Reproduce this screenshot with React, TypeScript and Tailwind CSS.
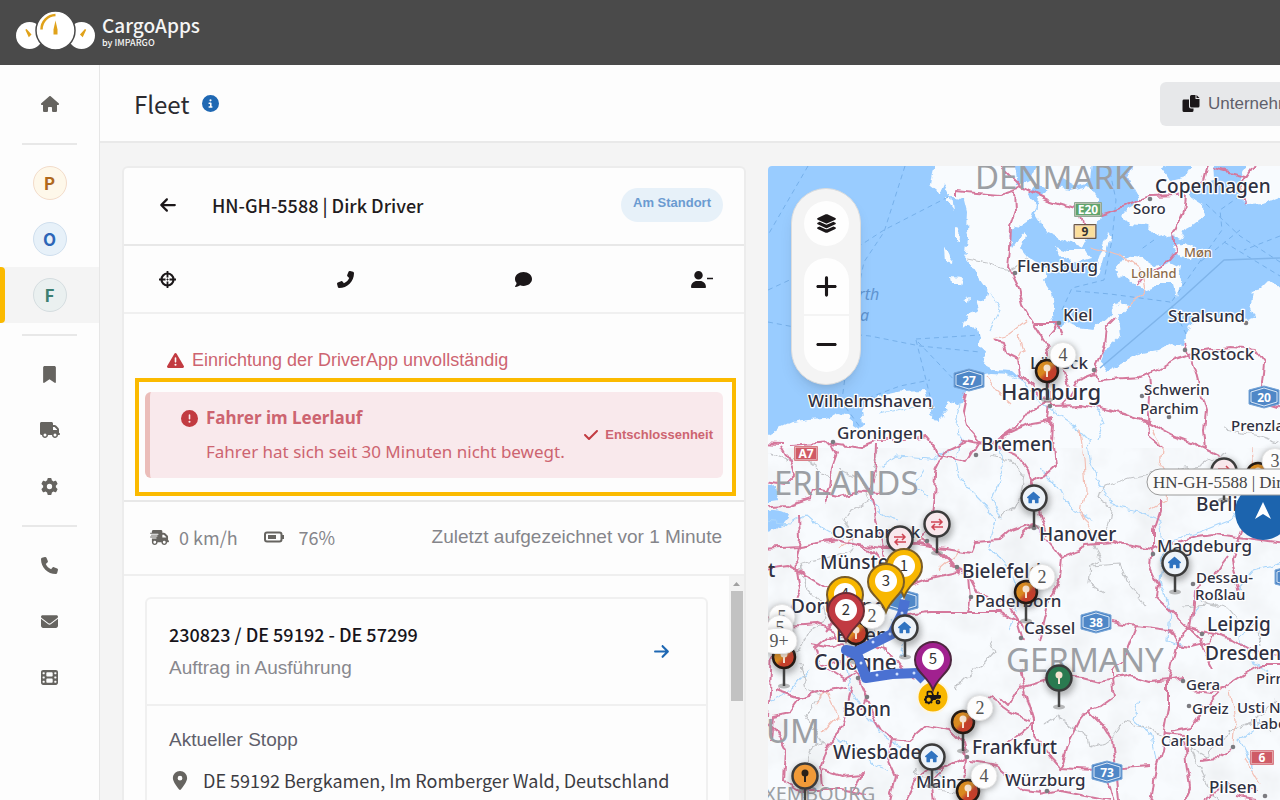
import type { ReactNode } from 'react';
import {
  FaArrowLeft,
  FaArrowRight,
  FaBookmark,
  FaCheck,
  FaCircleExclamation,
  FaCircleInfo,
  FaComment,
  FaEnvelope,
  FaFilm,
  FaGear,
  FaHouse,
  FaLayerGroup,
  FaLocationDot,
  FaMinus,
  FaPhone,
  FaPlus,
  FaTractor,
  FaTriangleExclamation,
  FaTruck,
  FaTruckFast,
  FaUser,
} from 'react-icons/fa6';

const sans = "font-['Noto_Sans_CJK_SC',sans-serif]";
const arial = "font-['Liberation_Sans',Arial,sans-serif]";

/* ---------- Header ---------- */

function Logo() {
  return (
    <svg viewBox="0 0 80 40" className="h-10 w-20 shrink-0" aria-hidden="true">
      <circle cx="13.5" cy="24.5" r="13.5" fill="#fff" />
      <circle cx="65.5" cy="24.5" r="13.5" fill="#fff" />
      <circle cx="39.5" cy="19.5" r="19.5" fill="#fff" stroke="#4a4a4a" strokeWidth="1.5" />
      <path d="M25.500 18.500a14.500 14.500 0 0 1 14-14.500" fill="none" stroke="#e0a21a" strokeWidth="2.500" />
      <path d="M39.500 9.500l2 9v5h-4v-5z" fill="#e0a21a" />
      <path d="M10 18.500l4.500 5-1.500 1.500z" fill="#e0a21a" stroke="#e0a21a" strokeWidth="1.500" />
      <path d="M69.500 18.500l-4.500 5 1.500 1.500z" fill="#e0a21a" stroke="#e0a21a" strokeWidth="1.500" />
    </svg>
  );
}

function TopBar() {
  return (
    <header className="flex h-[65px] shrink-0 items-center gap-1.5 bg-[#4a4a4a] px-4 pb-1 text-[#f5f5f5]">
      <Logo />
      <div className={sans}>
        <div className="text-[19px] leading-6 font-medium">CargoApps</div>
        <div className="text-[9px] leading-3 font-medium">by IMPARGO</div>
      </div>
    </header>
  );
}

/* ---------- Sidebar ---------- */

function NavItem({ label, active = false, children }: { label: string; active?: boolean; children: ReactNode }) {
  return (
    <a
      href="#"
      aria-label={label}
      className={
        active
          ? 'relative flex h-14 items-center justify-center bg-[#f4f4f4] text-[#666460]'
          : 'relative flex h-14 items-center justify-center text-[#666460]'
      }
    >
      {active && <span className="absolute inset-y-0 left-0 w-[5px] rounded-r bg-[#fbba00]" />}
      {children}
    </a>
  );
}

function NavDivider() {
  return (
    <div className="flex h-[23px] items-center px-[22px]">
      <hr className="w-full border-t-2 border-[#e8e8e8]" />
    </div>
  );
}

function Sidebar() {
  const badge = `flex size-[34px] items-center justify-center rounded-full border text-[17px] leading-5 font-bold ${sans}`;
  return (
    <nav className="w-[100px] shrink-0 border-r border-[#e6e6e6] bg-[#fdfdfd] pt-[11px]">
      <NavItem label="Start"><FaHouse size={18} /></NavItem>
      <NavDivider />
      <NavItem label="Planung"><span className={`${badge} border-[#f3dcca] bg-[#fef8ea] text-[#b0691c]`}>P</span></NavItem>
      <NavItem label="Aufträge"><span className={`${badge} border-[#cfdfee] bg-[#e7f1f9] text-[#2c66b8]`}>O</span></NavItem>
      <NavItem label="Fleet" active><span className={`${badge} border-[#d5dde0] bg-[#eaf0f0] text-[#3c7f72]`}>F</span></NavItem>
      <NavDivider />
      <NavItem label="Lesezeichen"><FaBookmark size={17} /></NavItem>
      <NavItem label="Fahrzeuge"><FaTruck size={20} /></NavItem>
      <NavItem label="Einstellungen"><FaGear size={17} /></NavItem>
      <NavDivider />
      <NavItem label="Telefon"><FaPhone size={17} /></NavItem>
      <NavItem label="Nachrichten"><FaEnvelope size={17} /></NavItem>
      <NavItem label="Videos"><FaFilm size={17} /></NavItem>
    </nav>
  );
}

/* ---------- Title bar ---------- */

function CopyIcon() {
  return (
    <svg viewBox="0 0 18 18" className="size-[18px] shrink-0" fill="#1b1719" aria-hidden="true">
      <path d="M1.500 4.500H7V11.500Q7 13.500 9 13.500H11.500V15.500Q11.500 17 10 17H2Q.500 17 .500 15.500V6Q.500 4.500 1.500 4.500Z" />
      <path d="M9.500 0H13.500V4H17.500V11Q17.500 12.500 16 12.500H9.500Q8 12.500 8 11V1.500Q8 0 9.500 0Z" />
      <path d="M14.500 0L17.500 3H14.500Z" />
    </svg>
  );
}

function TitleBar() {
  return (
    <div className="flex h-[78px] shrink-0 items-center overflow-hidden border-b-2 border-[#e9e9e9] bg-[#fdfdfd] pt-px pl-[34px]">
      <h1 className={`text-[24px] leading-8 text-[#2b2b30] ${sans}`}>Fleet</h1>
      <FaCircleInfo size={17} className="ml-[13px] text-[#1f68b3]" />
      <div className="ml-auto w-[120px]">
        <button type="button" className={`flex h-11 items-center gap-2 rounded-md bg-[#e7e8ea] px-[22px] text-[17px] whitespace-nowrap text-[#5f5f6b] ${arial}`}>
          <CopyIcon />
          Unternehmen
        </button>
      </div>
    </div>
  );
}

/* ---------- Driver panel ---------- */

function CrosshairIcon() {
  return (
    <svg viewBox="0 0 17 17" className="size-[17px]" fill="none" stroke="#1b1719" aria-hidden="true">
      <circle cx="8.500" cy="8.500" r="6" strokeWidth="2.200" />
      <path d="M8.500 0V6.500M8.500 10.500V17M0 8.500H6.500M10.500 8.500H17" strokeWidth="1.800" />
      <path d="M8.500 7.500v2M7.500 8.500h2" strokeWidth="1" />
    </svg>
  );
}

function BatteryIcon() {
  return (
    <svg viewBox="0 0 20 12" className="h-3 w-5" fill="none" aria-hidden="true">
      <rect x="1" y="1.500" width="16.500" height="9" rx="2" stroke="#666460" strokeWidth="2" />
      <rect x="4" y="4" width="8" height="4" fill="#666460" />
      <path d="M18 4h2v4h-2z" fill="#666460" />
    </svg>
  );
}

function DriverPanel() {
  const action = 'flex w-[22px] items-center justify-center';
  return (
    <section className="flex min-h-0 flex-col rounded-t-md border-2 border-b-0 border-[#ececec] bg-[#fdfdfd]">
      <div className="flex h-[78px] shrink-0 items-center border-b-2 border-[#e8e8e8] pr-[21px] pb-0.5 pl-[35px]">
        <button type="button" aria-label="Zurück" className="text-[#1b1719]"><FaArrowLeft size={18} /></button>
        <h2 className={`ml-[35px] text-[18px] leading-7 font-medium text-[#1f1b20] ${sans}`}>HN-GH-5588 | Dirk Driver</h2>
        <span className={`ml-auto flex h-[34px] items-center rounded-full bg-[#e7f1f9] px-3 pb-1 text-[13px] font-bold text-[#6b9bd1] ${arial}`}>Am Standort</span>
      </div>
      <div className="flex h-[68px] shrink-0 items-center justify-between border-b-2 border-[#f0f0f0] px-8 text-[#1b1719]">
        <button type="button" aria-label="Orten" className={action}><CrosshairIcon /></button>
        <button type="button" aria-label="Anrufen" className={action}><FaPhone size={17} className="-scale-x-100" /></button>
        <button type="button" aria-label="Nachricht" className={action}><FaComment size={17} /></button>
        <button type="button" aria-label="Fahrer entfernen" className={action}>
          <FaUser size={17} className="shrink-0" />
          <svg viewBox="0 0 6 17" className="h-[17px] w-1.5 shrink-0" aria-hidden="true"><path d="M0 7.500H6" stroke="#1b1719" strokeWidth="1.500" /></svg>
        </button>
      </div>
      <div className="flex h-[188px] shrink-0 flex-col border-b-2 border-[#e8e8e8] px-[11px] pt-8 pr-2">
        <p className={`flex h-7 items-center gap-2 pl-8 text-[18px] text-[#cd6470] ${arial}`}>
          <FaTriangleExclamation size={17} className="text-[#c23b41]" />
          Einrichtung der DriverApp unvollständig
        </p>
        <div className="mt-1 h-[118px] border-4 border-[#fbba00] py-2.5 pr-[9px] pl-1.5">
          <div className="flex h-[86px] items-center rounded-md border-l-[5px] border-[#ebbdb9] bg-[#f9e9ec] pr-2.5 pl-[31px]">
            <div className="grid grid-cols-[auto_1fr] gap-x-2 gap-y-2.5 font-['Noto_Sans',sans-serif] text-[#cd6470]">
              <FaCircleExclamation size={17} className="self-center text-[#c23b41]" />
              <h3 className="text-[17px] leading-6 font-bold">Fahrer im Leerlauf</h3>
              <p className="col-start-2 text-[17px] leading-6 whitespace-nowrap">Fahrer hat sich seit 30 Minuten nicht bewegt.</p>
            </div>
            <button type="button" className={`ml-auto flex items-center gap-1.5 pl-2 text-[13px] font-bold text-[#cd6470] ${arial}`}>
              <FaCheck size={16} className="text-[#c23b41]" />
              Entschlossenheit
            </button>
          </div>
        </div>
      </div>
      <div className={`flex h-[74px] shrink-0 items-center border-b-2 border-[#efefef] pr-[22px] pb-0.5 pl-[26px] text-[18px] leading-7 text-[#85858a] ${sans}`}>
        <FaTruckFast size={19} className="text-[#666460]" />
        <span className="ml-2.5">0 km/h</span>
        <span className="ml-[26px]"><BatteryIcon /></span>
        <span className="ml-[15px]">76%</span>
        <span className={`ml-auto text-[19px] ${arial}`}>Zuletzt aufgezeichnet vor 1 Minute</span>
      </div>
      <div className="flex min-h-0 flex-1">
        <div className="min-w-0 flex-1 overflow-hidden px-[21px] pt-[21px]">
          <article className="rounded-t-md border-2 border-[#f0f0f0]">
            <div className="flex h-[107px] items-center border-b-2 border-[#f0f0f0] pr-9 pl-[22px]">
              <div>
                <h3 className={`text-[18px] leading-8 font-medium text-[#17141a] ${sans}`}>230823 / DE 59192 - DE 57299</h3>
                <p className={`text-[19px] leading-9 text-[#88888e] ${arial}`}>Auftrag in Ausführung</p>
              </div>
              <button type="button" aria-label="Auftrag öffnen" className="ml-auto text-[#1f68b3]"><FaArrowRight size={17} /></button>
            </div>
            <div className="pt-4 pb-5 pl-[22px]">
              <h4 className={`text-[19px] leading-9 text-[#5f5f6b] ${arial}`}>Aktueller Stopp</h4>
              <p className={`mt-0.5 flex items-center gap-3.5 pl-0.5 text-[18px] leading-10 whitespace-nowrap text-[#3c3c42] ${sans}`}>
                <FaLocationDot size={19} className="w-[18px] text-[#666460]" />
                DE 59192 Bergkamen, Im Romberger Wald, Deutschland
              </p>
            </div>
          </article>
        </div>
        <div className="flex w-[15px] shrink-0 flex-col items-center bg-[#f3f3f3]">
          <svg viewBox="0 0 15 15" className="size-[15px]" aria-hidden="true"><path d="M4 10L7.500 6L11 10Z" fill="#a0a0a0" /></svg>
          <div className="h-[110px] w-3 bg-[#c2c2c2]" />
        </div>
      </div>
    </section>
  );
}

/* ---------- Map ---------- */

const SEA = [
  'M740 140H934V166L931 186L940 193L944 184L950 195L955 198L964 200L967 212L966 230L968 240L965 258L973 268L980 280L988 292L986 302L976 300L979 311L968 315L964 325L978 328L980 338L978 346L986 352L983 364L994 370L1012 371L1020 378L1010 375L992 374L976 376L972 388L966 391L963 404L956 405L948 400L944 405L945 416L936 421L930 414L934 407L928 403L925 390L903 391L880 396L868 400L862 410L864 424L858 430L852 426L850 416L838 413L826 418L808 419L793 422L780 428L768 435L740 445Z',
  'M1094 140H1133V166L1129 178L1134 190L1140 201L1128 208L1121 215L1130 224L1148 226L1158 238L1172 234L1180 238L1184 230L1195 224L1205 216L1204 205L1190 196L1190 186L1206 182L1214 180L1212 140H1247V166L1241 178L1236 192L1248 205L1264 204L1300 190V286H1280L1268 282L1260 290L1252 292L1250 304L1255 316L1244 320L1226 316L1210 318L1200 314L1192 324L1184 338L1183 346L1170 344L1160 350L1138 354L1122 364L1108 370L1101 360L1106 348L1120 336L1118 318L1130 305L1120 301L1115 308L1106 318L1094 328L1078 326L1066 322L1056 330L1052 316L1054 306L1052 292L1044 280L1050 270L1038 264L1026 256L1020 248L1026 236L1020 226L1032 218L1036 206L1028 194L1036 184L1050 190L1062 178L1076 186L1090 182Z',
  'M1164 170L1176 140H1192V166L1186 176L1170 180Z',
  'M1010 140H1036V166L1030 178L1018 184Z',
  'M1016 226L1030 228L1020 236L1012 248L1008 236Z',
  'M740 490L776 486L778 500L740 506ZM740 512Q784 506 789 516Q784 532 740 536Z',
];

const ISLANDS = [
  'M1038 196L1052 186L1070 190L1088 186L1098 200L1100 216L1094 232L1080 246L1064 240L1046 232L1036 216Z',
  'M1108 232L1111 236L1100 272L1095 279L1098 260Z',
  'M1056 246L1068 250L1084 250L1090 258L1076 262L1060 256Z',
  'M1115 268L1124 256L1142 258L1158 268L1170 262L1182 268L1178 284L1160 284L1144 290L1130 282L1118 274Z',
  'M1174 246L1184 242L1196 250L1192 260L1180 258Z',
  'M1176 270L1182 282L1176 298L1172 284Z',
  'M944 248L952 256L951 264L945 262ZM955 228L960 230L958 241L955 238ZM951 277L962 278L960 284L952 284ZM946 196L952 198L954 210L948 202ZM963 300L969 297L968 302Z',
];

const ROADS = [
  'M956 196L956 190L976 192L1000 194L1020 188M1015 191L1016 210L1011 226L1010 248L1008 268L1018 288L1022 304L1030 318L1044 340L1048 350L1048 400',
  'M990 156L1000 166L1020 186L1048 200L1074 208L1100 215L1120 208L1150 197L1178 196L1194 192M1186 196L1184 212L1174 234L1176 252L1166 264L1148 272L1137 286',
  'M1192 192L1204 180L1210 156M1214 168L1245 176L1240 184L1246 205M1245 178L1260 156M1080 214L1084 226',
  'M1035 324L1058 324L1048 336M1058 324L1062 334M1116 317L1107 326L1105 346L1097 366L1094 374L1098 380L1140 377L1152 373L1174 360L1190 355',
  'M1185 343L1190 356L1196 374L1202 398L1206 412L1204 430L1206 450M1190 354L1210 350L1232 348L1255 350L1264 362L1262 384L1264 402L1290 410',
  'M1151 373L1152 384L1148 396L1147 415L1148 436L1162 448',
  'M1062 350L1064 372L1068 386M1094 374L1078 380L1068 398L1062 404M1050 404L1048 420L1054 424L1053 440L1056 466L1045 476L1030 482L1029 496',
  'M993 339L1003 342L1006 352L1018 358L1020 374L1030 384L1040 396L1052 405L1082 404L1110 410L1148 422L1174 436L1200 446L1220 456',
  'M1048 402L1030 410L1020 424L1000 438L992 446L978 440L966 426L962 412L966 392M1054 420L1030 424L1008 434L990 446L964 440L978 442L1000 448L1018 456L1028 470L1034 492',
  'M758 443L784 444M790 446L832 443L860 447L877 440L904 440L926 436L936 448L940 456L966 462L978 442M966 442L945 452L935 472L934 500L930 526L918 542L900 548L880 548L852 544',
  'M832 443L837 454L832 468L830 488L824 502M877 444L876 466L870 492L876 512L880 538L884 560L880 580L900 600',
  'M782 448L790 462L794 474L784 484L758 480M758 508L786 506L810 498L812 490L840 496L856 492L880 494M799 516L800 540L796 562L800 590L792 610L784 622L758 626',
  'M758 548L800 546L836 540L852 544L870 550L880 562M758 570L788 566L808 576L828 588L846 608',
  'M920 540L936 548L952 564L960 574M880 548L904 542L930 546L972 552L976 542L1000 540L1012 530L1034 522M930 544L952 566L968 574L978 594L1008 604L1018 620L1024 640',
  'M900 616L930 612L960 612L1000 612L1022 622L1026 630M958 572L930 578L908 586L890 598L864 610L840 632M968 576L970 600L968 612',
  'M1034 522L1046 538L1062 558L1078 552L1084 544L1114 542L1120 544L1152 550M1062 558L1060 580L1050 600L1045 620L1040 640M1034 522L1020 536M1040 512L1048 536',
  'M1152 550L1150 566L1158 584L1156 596L1172 612L1188 628L1200 640L1208 660L1212 668M1154 550L1154 530L1160 512L1160 500M1152 550L1170 544L1198 536L1212 534L1232 536L1262 540L1290 544',
  'M1228 556L1216 572L1194 590L1192 616L1190 628L1212 634L1232 640L1252 652L1290 656M1192 646L1208 642L1212 634M1188 626L1176 646L1172 664L1168 682L1168 708L1164 730L1162 750L1156 768L1150 810',
  'M1112 622L1136 626L1170 630L1178 644L1190 646M1136 626L1128 646L1124 660L1112 668L1112 678M1240 600L1232 560L1244 528',
  'M1020 688L1034 684L1060 676L1084 678L1100 682L1130 676L1150 682L1170 680L1186 678M1112 680L1114 696L1100 706L1088 710L1080 720L1070 740L1060 770M1088 710L1102 724L1112 740L1116 768L1120 810',
  'M1290 664L1262 664L1248 672L1226 686L1206 706L1190 728L1170 732M1226 688L1212 692L1190 690M1164 734L1184 736L1186 762L1190 788L1180 810M1200 760L1218 758L1232 748',
  'M1020 670L1026 694L1034 720L1034 734L1050 756L1060 768L1094 770L1150 766M1034 722L1020 734L1004 744M1098 770L1110 786L1116 810M1040 794L1060 790L1110 800',
  'M758 616L788 626L816 624L836 632L846 652L856 672L866 696L862 710M776 690L800 698L822 692L846 688M772 650L770 692L768 716M800 698L790 712L772 716L770 740',
  'M846 634L826 638L814 648L820 664L846 680L856 674M840 640L864 640L886 650L900 668L912 680M826 632L836 620L860 616M810 644L832 648L850 640L866 650M820 666L840 660L852 668L858 676',
  'M852 686L846 710L840 732L826 748L820 766L822 786M866 698L874 716L882 730L892 738L910 740L926 726L950 730L962 742L966 758M892 738L888 758L896 776L888 810',
  'M966 758L946 768L930 768L916 778L900 810M1030 720L1010 712L990 698L976 708M1020 686L1008 706L1000 698M966 758L964 780L976 810M946 766L932 780L936 810M970 762L996 766L1024 790L1042 792',
  'M758 716L776 730L786 750L784 780L800 790L840 790L868 796M822 770L842 776L862 774L852 792M1234 796L1256 800M1204 800L1230 784L1258 790',
];

const MINOR = [
  'M992 338L1010 334L1026 322M1090 246L1120 254L1140 270L1146 292L1126 308M1020 336L1024 350L1018 362M986 376L996 390L1012 404M940 570L956 556L960 546M816 706L826 690L838 716L822 734M1080 430L1084 460L1086 490L1082 512L1094 536M1152 430L1162 448L1160 466L1168 480L1166 500L1150 510M1230 690L1236 720L1234 746M1250 446L1252 470L1248 500M838 550L850 540L860 536M1246 760L1260 784',
];

const RIVERS = [
  'M1000 372L1020 380L1036 398L1052 410L1070 422L1088 440L1090 460L1100 486L1116 508L1140 512L1160 520L1164 550L1160 580L1170 610L1168 640L1184 646',
  'M960 404L956 424L962 440L956 460L960 480L980 500L996 520L990 546L1010 570L1020 600L1010 630',
  'M758 520L790 524L806 514L822 528L844 540M880 466L896 456L930 458L952 452M924 470L914 486L928 496M870 500L884 516L898 520M1000 450L1004 470L992 500L1002 520M1040 470L1060 490L1070 510L1094 520',
  'M846 660L850 690L862 710L880 732L904 750L924 760L946 780M900 656L906 640L890 620M770 700L792 690L810 668M836 736L856 750L872 764L890 770M1140 700L1134 720L1152 736L1156 760M1170 540L1200 532L1230 520L1246 494',
  'M1220 600L1236 590L1254 570L1290 560M1200 606L1190 620M1252 620L1240 640L1254 664L1290 684M1262 720L1240 740L1254 770M990 292L1000 310L990 330M880 414L904 408L924 404M1096 404L1104 422L1098 440',
];

const BORDERS = [
  'M840 470L862 480L870 500L850 510L844 520L856 536L848 552L820 560L800 564L806 586L822 604L826 620L810 630L800 650L780 660M848 606L870 620L884 650M800 664L806 690L820 696L806 716L822 744L810 750L800 790L812 810M768 452L786 460L798 456L830 478M876 448L874 480',
  'M1228 452L1200 466L1160 472L1130 478L1104 486L1100 498L1112 506L1108 528L1094 546L1102 560L1090 566L1088 584L1104 594M1090 566L1120 564L1126 580L1146 606M1184 606L1208 604L1230 610L1246 630L1256 624L1260 646',
  'M1044 724L1056 716L1074 728L1088 736L1090 748L1112 740L1124 722L1150 728L1168 740L1190 746L1206 756L1222 740L1232 730L1254 722L1276 700M1200 600L1218 606M1240 730L1256 720L1270 730M1190 744L1198 764L1212 790L1226 810M966 258L988 262L1000 268L1010 270L1026 258M1224 430L1260 436L1290 446M1240 500L1244 480L1230 460',
  'M954 690L968 676L984 664L994 652L990 640M914 770L940 790L960 794M1000 520L1020 500L1024 476L1010 460L990 456',
];

const FERRIES = [
  'M808 166L768 235M905 166L884 232L864 262L858 290L850 340L842 400M768 290L850 252L884 230L950 196M768 322L810 330L870 336L920 346L960 350L980 352M916 339L980 335M916 340L924 372L930 396M918 342L960 386M840 400L852 416L862 430M868 398L900 386L930 380',
  'M1110 172L1116 200L1112 240L1104 280L1072 288L1062 310M1076 291L1110 294L1170 302L1186 334M1240 196L1220 210L1222 230L1170 304M1206 204L1240 236L1280 262M1240 230L1200 262M1280 236L1244 250M1224 242L1280 276M1154 240L1140 250',
];

type Label = [string, number, number];

const LABELS: { size: string; items: Label[] }[] = [
  { size: 'text-[22px]', items: [['Hamburg', 1001, 400]] },
  {
    size: 'text-[19px]',
    items: [
      ['Copenhagen', 1155, 193],
      ['Bremen', 981, 451],
      ['Hanover', 1039, 541],
      ['Berlin', 1196, 511],
      ['Leipzig', 1207, 631],
      ['Dresden', 1205, 660],
      ['Bielefeld', 962, 578],
      ['Münster', 820, 569],
      ['Dortmund', 791, 613],
      ['Essen', 836, 642],
      ['Bonn', 843, 716],
      ['Frankfurt', 972, 754],
      ['Wiesbaden', 833, 759],
    ],
  },
  { size: 'text-[21px]', items: [['Cologne', 814, 670]] },
  {
    size: 'text-[17px]',
    items: [
      ['Flensburg', 1017, 272],
      ['Kiel', 1063, 321],
      ['Lübeck', 1030, 369],
      ['Stralsund', 1168, 322],
      ['Rostock', 1190, 360],
      ['Wilhelmshaven', 808, 407],
      ['Groningen', 837, 439],
      ['Magdeburg', 1157, 552],
      ['Osnabrück', 832, 538],
      ['Paderborn', 975, 607],
      ['Cassel', 1024, 634],
      ['Mainz', 916, 788],
      ['Würzburg', 1005, 786],
      ['Pilsen', 1209, 793],
    ],
  },
  {
    size: 'text-[15px]',
    items: [
      ['Soro', 1133, 214],
      ['Schwerin', 1144, 395],
      ['Parchim', 1140, 414],
      ['Prenzlau', 1231, 431],
      ['Dessau-', 1196, 583],
      ['Roßlau', 1195, 600],
      ['Gera', 1186, 690],
      ['Greiz', 1192, 714],
      ['Usti Nad', 1237, 713],
      ['Labem', 1252, 729],
      ['Carlsbad', 1161, 746],
      ['Pirna', 1256, 684],
    ],
  },
];

const TOWNS: [number, number][] = [
  [1015, 273], [1059, 323], [1094, 370], [1185, 350], [1150, 199], [1142, 396], [1169, 417], [1246, 323], [931, 407],
  [833, 442], [976, 455], [1050, 406], [1034, 528], [1153, 554], [1193, 584], [1202, 634], [957, 567], [971, 597],
  [867, 697], [1021, 638], [1183, 681], [1189, 706], [1233, 747], [967, 757], [1047, 791], [1265, 796], [927, 541], [858, 678],
];

function Shield({ x, y, text }: { x: number; y: number; text: string }) {
  return (
    <g>
      <path d={`M${x - 15} ${y - 7}L${x} ${y - 11}L${x + 15} ${y - 7}L${x + 15} ${y + 7}L${x} ${y + 11}L${x - 15} ${y + 7}Z`} fill="#4f87c7" stroke="#78a6d8" />
      <path d={`M${x - 13} ${y - 5}L${x} ${y - 9}L${x + 13} ${y - 5}L${x + 13} ${y + 5}L${x} ${y + 9}L${x - 13} ${y + 5}Z`} fill="none" stroke="#dce9f7" />
      <text x={x} y={y + 5} textAnchor="middle" className="fill-white text-[12px] font-bold">{text}</text>
    </g>
  );
}

function Plate({ x, y, w, text, fill, ink, edge }: { x: number; y: number; w: number; text: string; fill: string; ink: string; edge: string }) {
  return (
    <g>
      <rect x={x - w / 2} y={y - 8} width={w} height="15" rx="1" fill={edge} />
      <rect x={x - w / 2 + 1.5} y={y - 6.5} width={w - 3} height="12" fill={fill} stroke="#f2d8d8" strokeWidth="0.500" />
      <text x={x} y={y + 4} textAnchor="middle" fill={ink} className="text-[12px] font-bold">{text}</text>
    </g>
  );
}

function RoundPin({ x, y, kind }: { x: number; y: number; kind: 'home' | 'swap' | 'orange' | 'green' | 'mixed' }) {
  const fills = { home: '#edf3f9', swap: '#f8e8ec', orange: '#f09a38', green: '#2a7a50', mixed: 'url(#mixed)' };
  const radius = kind === 'mixed' ? 11 : 12.5;
  return (
    <g>
      <ellipse cx={x} cy={y + 29} rx="6" ry="2.500" fill="#777" opacity="0.500" />
      <path d={`M${x} ${y + 10}V${y + 29}`} stroke="#444" strokeWidth="2.500" />
      <circle cx={x + 1} cy={y + 3} r={radius + 3} fill="#333" opacity="0.350" filter="url(#soft)" />
      <circle cx={x} cy={y} r={radius} fill={fills[kind]} stroke={kind === 'mixed' ? '#241a14' : '#3b3b3b'} strokeWidth="2.500" />
      {kind === 'home' && <FaHouse x={x - 7} y={y - 7} size={13} color="#2f73c0" />}
      {kind === 'swap' && (
        <path d={`M${x - 6} ${y - 2}H${x + 4}M${x + 2} ${y - 5}L${x + 5} ${y - 2}L${x + 2} ${y + 1}M${x + 6} ${y + 3}H${x - 4}M${x - 2} ${y}L${x - 5} ${y + 3}L${x - 2} ${y + 6}`} stroke="#cf4654" strokeWidth="1.500" fill="none" />
      )}
      {(kind === 'orange' || kind === 'green' || kind === 'mixed') && (
        <g fill={kind === 'orange' ? '#2a2018' : '#f6e3d0'}>
          <circle cx={x} cy={y - 3} r="3.500" />
          <path d={`M${x - 1} ${y}H${x + 1}V${y + 6}H${x - 1}Z`} />
        </g>
      )}
    </g>
  );
}

function Count({ x, y, text, w = 28 }: { x: number; y: number; text: string; w?: number }) {
  return (
    <g>
      <rect x={x - w / 2} y={y - 12} width={w} height="26" rx="13" fill="#555" opacity="0.450" filter="url(#soft)" />
      <rect x={x - w / 2 + 1} y={y - 12.5} width={w - 2} height="25" rx="12.500" fill="#fdfdfd" stroke="#e3e3e3" />
      <text x={x} y={y + 6} textAnchor="middle" className="fill-[#555] font-['Liberation_Serif',serif] text-[18px]">{text}</text>
    </g>
  );
}

function DropPin({ x, y, text, fill, edge }: { x: number; y: number; text: string; fill: string; edge: string }) {
  return (
    <g>
      <path d={`M${x} ${y + 30}C${x - 5} ${y + 16} ${x - 18} ${y + 12} ${x - 18} ${y}A18 18 0 0 1 ${x + 18} ${y}C${x + 18} ${y + 12} ${x + 5} ${y + 16} ${x} ${y + 30}Z`} fill={fill} stroke={edge} strokeWidth="2" />
      <circle cx={x} cy={y - 1} r="11" fill="#fff" />
      <text x={x} y={y + 4} textAnchor="middle" className="fill-[#333] font-['Noto_Sans_CJK_SC',sans-serif] text-[15px]">{text}</text>
    </g>
  );
}

function MapDrawing() {
  return (
    <svg
      viewBox="768 166 512 634"
      preserveAspectRatio="xMinYMin slice"
      className="absolute inset-0 size-full font-['Noto_Sans',sans-serif]"
      role="img"
      aria-label="Karte mit Fahrzeugen"
    >
      <defs>
        <filter id="soft" x="-50%" y="-50%" width="200%" height="200%"><feGaussianBlur stdDeviation="3" /></filter>
        <filter id="relief">
          <feTurbulence type="fractalNoise" baseFrequency="0.030" numOctaves="4" seed="4" />
          <feColorMatrix values="0 0 0 0 0.850  0 0 0 0 0.870  0 0 0 0 0.890  0 0 0 1.600 -0.600" />
        </filter>
        <filter id="coast" filterUnits="userSpaceOnUse" x="740" y="140" width="570" height="690">
          <feTurbulence type="fractalNoise" baseFrequency="0.090" numOctaves="3" seed="8" result="n" />
          <feDisplacementMap in="SourceGraphic" in2="n" scale="9" xChannelSelector="R" yChannelSelector="G" />
        </filter>
        <filter id="bends" filterUnits="userSpaceOnUse" x="740" y="140" width="570" height="690">
          <feTurbulence type="fractalNoise" baseFrequency="0.070" numOctaves="2" seed="3" result="n" />
          <feDisplacementMap in="SourceGraphic" in2="n" scale="9" xChannelSelector="R" yChannelSelector="G" />
        </filter>
        <linearGradient id="mixed" x1="0" y1="0" x2="1" y2="1">
          <stop offset="0.450" stopColor="#d98a20" />
          <stop offset="0.600" stopColor="#c43f2b" />
        </linearGradient>
      </defs>
      <rect x="768" y="166" width="512" height="634" fill="#f8fbfe" />
      <rect x="768" y="480" width="512" height="320" filter="url(#relief)" />
      <g filter="url(#coast)">
        <g fill="#99ccff">{SEA.map((d) => <path key={d} d={d} />)}</g>
        <g fill="#f8fbfe">{ISLANDS.map((d) => <path key={d} d={d} />)}</g>
      </g>
      <g fill="none" strokeLinejoin="round">
        <g stroke="#76b0ea" strokeWidth="1" strokeDasharray="5 4">{FERRIES.map((d) => <path key={d} d={d} />)}</g>
        <path d="M1100 368L1180 300L1224 260L1280 258" stroke="#7fb4ea" strokeWidth="1.500" />
        <g filter="url(#coast)">
          <g stroke="#acd7fb" strokeWidth="1.200">{RIVERS.map((d) => <path key={d} d={d} />)}</g>
          <g stroke="#c3c5c8" strokeWidth="1.200">{BORDERS.map((d) => <path key={d} d={d} />)}</g>
        </g>
        <g filter="url(#bends)">
          <g stroke="#f3bfb4" strokeWidth="1.200">{MINOR.map((d) => <path key={d} d={d} />)}</g>
          <g stroke="#d5789c" strokeWidth="2">{ROADS.map((d) => <path key={d} d={d} />)}</g>
        </g>
      </g>
      <g fill="#7b7b80">{TOWNS.map(([x, y]) => <circle key={`${x}-${y}`} cx={x} cy={y} r="2.300" />)}</g>

      <g className="fill-[#9c9fa4] text-[33px]">
        <text x="975" y="189">DENMARK</text>
        <text x="774" y="495">ERLANDS</text>
        <text x="1006" y="672">GERMANY</text>
        <text x="766" y="743">UM</text>
      </g>
      <text x="764" y="801" className="fill-[#9c9fa4] text-[20px]">XEMBOURG</text>
      <g className="fill-[#5f94cf] text-[16px] italic">
        <text x="838" y="300">North</text>
        <text x="844" y="321">Sea</text>
      </g>
      <g className="fill-[#8a6a4a] text-[13px] font-medium" stroke="#fff" strokeWidth="2" paintOrder="stroke">
        <text x="1184" y="257">Møn</text>
        <text x="1131" y="278">Lolland</text>
      </g>
      {LABELS.map((group) => (
        <g key={group.size} className={`fill-[#2f3142] font-medium ${group.size}`} stroke="#fff" strokeWidth="2.500" strokeLinejoin="round" paintOrder="stroke">
          {group.items.map(([name, x, y]) => <text key={name} x={x} y={y}>{name}</text>)}
        </g>
      ))}
      <text x="768" y="577" className="fill-[#2f3142] text-[19px] font-medium">t</text>

      <Plate x={1088} y={210} w={28} text="E20" fill="#5ea56c" ink="#fff" edge="#8fa894" />
      <Plate x={1085} y={232} w={23} text="9" fill="#fbdf9c" ink="#333" edge="#6b5a48" />
      <Plate x={806} y={454} w={24} text="A7" fill="#cf5b66" ink="#fff" edge="#d98089" />
      <Plate x={1262} y={758} w={24} text="6" fill="#cf5b66" ink="#fff" edge="#d98089" />
      <Shield x={969} y={380} text="27" />
      <Shield x={1264} y={397} text="20" />
      <Shield x={1096} y={622} text="38" />
      <Shield x={1107} y={772} text="73" />
      <Shield x={903} y={601} text="1" />
      <Shield x={1290} y={577} text="2" />

      <RoundPin x={1047} y={371} kind="mixed" />
      <Count x={1063} y={355} text="4" />
      <RoundPin x={1034} y={498} kind="home" />
      <RoundPin x={900} y={539} kind="swap" />
      <RoundPin x={937} y={524} kind="swap" />
      <RoundPin x={1026} y={592} kind="mixed" />
      <Count x={1042} y={577} text="2" />
      <RoundPin x={1175} y={563} kind="home" />
      <RoundPin x={856} y={633} kind="mixed" />
      <Count x={872} y={616} text="2" />
      <RoundPin x={784} y={657} kind="mixed" />
      <Count x={782} y={617} text="5" />
      <Count x={780} y={628} text="5" />
      <Count x={779} y={641} text="9+" w={38} />

      <path d="M905 600L902 614L892 634L856 652L846 650L858 656L866 678L892 674L917 673L924 680" fill="none" stroke="#4a71d2" strokeWidth="10" strokeLinejoin="round" />
      <g fill="#cfe0ff">
        <circle cx="902" cy="613" r="1.500" /><circle cx="890" cy="634" r="1.500" /><circle cx="873" cy="642" r="1.500" /><circle cx="861" cy="663" r="1.500" />
        <circle cx="877" cy="675" r="1.500" /><circle cx="897" cy="674" r="1.500" /><circle cx="914" cy="673" r="1.500" />
      </g>
      <RoundPin x={905} y={628} kind="home" />
      <DropPin x={904} y={567} text="1" fill="#f8b700" edge="#7a5d28" />
      <DropPin x={886} y={582} text="3" fill="#f8b700" edge="#7a5d28" />
      <DropPin x={845} y={595} text="4" fill="#f8b700" edge="#7a5d28" />
      <DropPin x={846} y={611} text="2" fill="#c13a42" edge="#6a2d33" />
      <circle cx="933" cy="697" r="15.500" fill="#f8b700" stroke="#fdf6e4" strokeWidth="2" />
      <FaTractor x={924} y={689} size={17} color="#1b1719" />
      <DropPin x={933} y={660} text="5" fill="#a1218f" edge="#4e2740" />
      <RoundPin x={963} y={722} kind="mixed" />
      <Count x={980} y={708} text="2" />
      <RoundPin x={932} y={757} kind="home" />
      <RoundPin x={968} y={791} kind="mixed" />
      <Count x={984} y={776} text="4" />
      <RoundPin x={805} y={776} kind="orange" />
      <RoundPin x={1059} y={678} kind="green" />

      <RoundPin x={1224} y={471} kind="swap" />
      <RoundPin x={1258} y={474} kind="mixed" />
      <Count x={1275} y={461} text="3" />
      <circle cx="1263" cy="512" r="28" fill="#1c64ae" />
      <path d="M1263 502L1271 519L1263 514L1255 519Z" fill="#fff" />
      <rect x="1147" y="469" width="200" height="26" rx="13" fill="#fbfbfb" stroke="#9a9a9a" />
      <text x="1153" y="488" className="fill-[#444] font-['Liberation_Serif',serif] text-[17px]">HN-GH-5588 | Dirk Driver</text>
    </svg>
  );
}

function FleetMap() {
  return (
    <section className="relative overflow-hidden rounded-tl-sm bg-[#f8fbfe]">
      <MapDrawing />
      <div className="absolute top-[22px] left-[23px] flex w-[70px] flex-col items-center gap-3 rounded-full border border-[#dcdcdc] bg-[#f4f4f4] py-3 text-[#1b1719] shadow-lg">
        <button type="button" aria-label="Ebenen" className="flex size-[45px] items-center justify-center rounded-full bg-[#fefefe]"><FaLayerGroup size={21} /></button>
        <div className="flex flex-col gap-0.5 overflow-hidden rounded-full">
          <button type="button" aria-label="Vergrößern" className="flex h-14 w-[45px] items-center justify-center bg-[#fefefe]"><FaPlus size={25} /></button>
          <button type="button" aria-label="Verkleinern" className="flex h-14 w-[45px] items-center justify-center bg-[#fefefe]"><FaMinus size={25} /></button>
        </div>
      </div>
    </section>
  );
}

export default function App() {
  return (
    <div className="flex h-screen flex-col overflow-hidden bg-[#f4f4f4]">
      <TopBar />
      <div className="flex min-h-0 flex-1">
        <Sidebar />
        <div className="flex min-w-0 flex-1 flex-col">
          <TitleBar />
          <main className="grid min-h-0 flex-1 grid-cols-[minmax(0,624fr)_minmax(0,512fr)] grid-rows-[minmax(0,1fr)] gap-[22px] pt-[23px] pl-[22px]">
            <DriverPanel />
            <FleetMap />
          </main>
        </div>
      </div>
    </div>
  );
}
